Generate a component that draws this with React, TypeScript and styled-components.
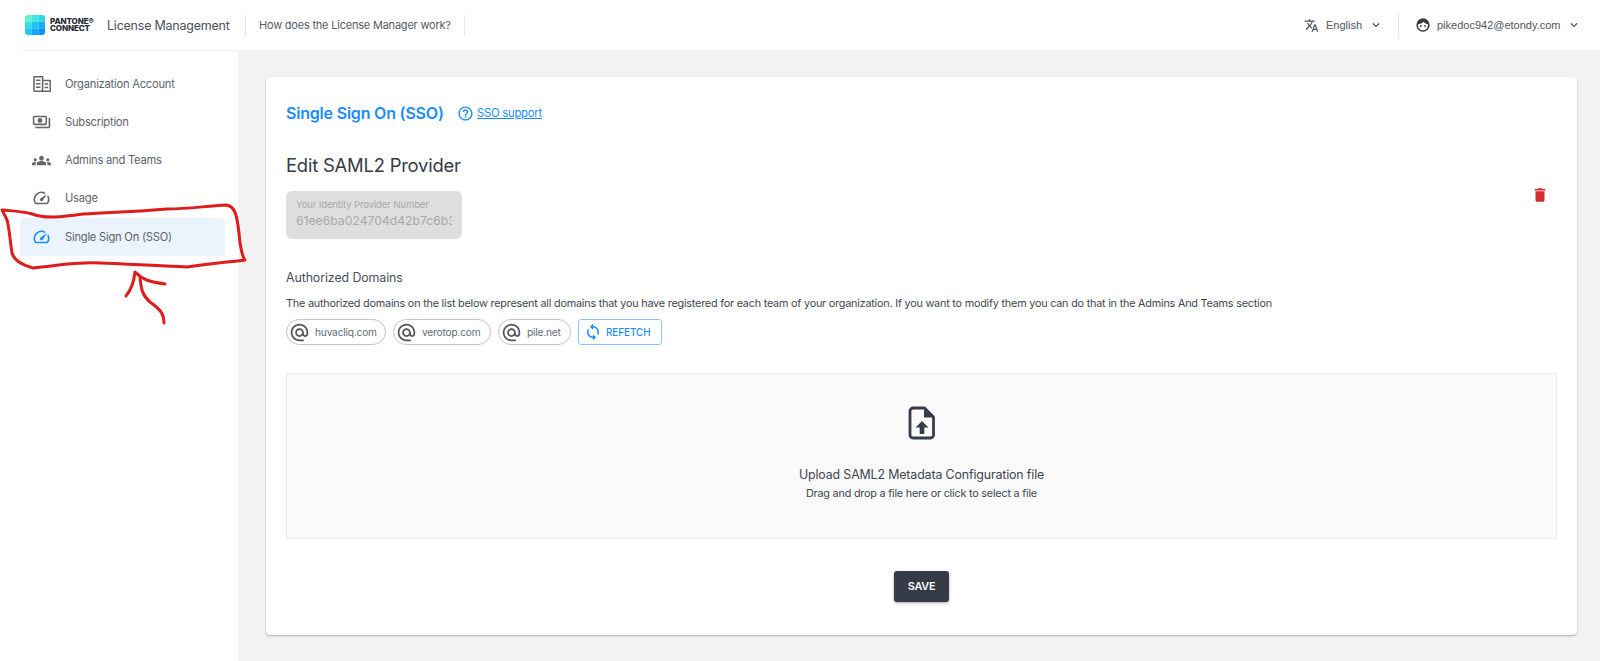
import React from "react";
import styled, { createGlobalStyle } from "styled-components";
import {
  MdOutlinePayments,
  MdGroups,
  MdSpeed,
  MdHelpOutline,
  MdDelete,
  MdSync,
  MdAlternateEmail,
  MdKeyboardArrowDown,
  MdTranslate,
} from "react-icons/md";

const Global = createGlobalStyle`
  html, body { margin: 0; padding: 0; background: #f2f2f2; }
  body { font-family: Inter, "Liberation Sans", sans-serif; color: #353b47; overflow: hidden; }
  * { box-sizing: border-box; }
`;

const Page = styled.div`
  position: relative;
  width: 1600px;
  height: 661px;
  display: flex;
  flex-direction: column;
  overflow: hidden;
`;

const Header = styled.header`
  height: 50px;
  background: #fff;
  display: flex;
  align-items: center;
  padding: 0 19px 0 25px;
  flex: none;
`;

const LogoMark = styled.svg`
  width: 20px;
  height: 20px;
  flex: none;
`;

const LogoText = styled.div`
  margin-left: 5px;
  font-size: 8px;
  line-height: 7.5px;
  font-weight: 800;
  color: #23272f;
  width: 57px;
  letter-spacing: -0.1px;
`;

const AppName = styled.div`
  font-size: 12.5px;
  color: #4a505c;
  letter-spacing: -0.23px;
  width: 138px;
  white-space: nowrap;
`;

const Divider = styled.div<{ $h?: number }>`
  width: 1px;
  height: ${(p) => p.$h ?? 21}px;
  background: #e6e6e6;
  flex: none;
`;

const HelpLink = styled.div`
  font-size: 11px;
  color: #555b66;
  width: 218px;
  padding-left: 13px;
  letter-spacing: -0.21px;
  white-space: nowrap;
`;

const Spacer = styled.div`
  flex: 1;
`;

const HeaderAction = styled.div<{ $w: number; $pad?: number }>`
  display: flex;
  align-items: center;
  width: ${(p) => p.$w}px;
  padding-left: ${(p) => p.$pad ?? 0}px;
  font-family: "Liberation Sans", sans-serif;
  font-size: 11px;
  color: #4f5561;
  gap: 7px;
  flex: none;
  white-space: nowrap;
  svg { flex: none; }
`;

const Chevron = styled(MdKeyboardArrowDown)`
  color: #3a404c;
`;

const Body = styled.div`
  flex: 1;
  display: flex;
  min-height: 0;
`;

const Sidebar = styled.nav`
  width: 238px;
  background: #fff;
  flex: none;
`;

const SidebarRule = styled.div`
  height: 1px;
  margin-left: 20px;
  background: #f2f2f2;
`;

const NavList = styled.div`
  display: flex;
  flex-direction: column;
  padding: 13.4px 13px 0 20px;
`;

const NavItem = styled.div<{ $active?: boolean }>`
  height: 38.3px;
  display: flex;
  align-items: center;
  gap: 14px;
  padding-left: 12px;
  border-radius: 4px;
  font-size: 11.2px;
  letter-spacing: -0.24px;
  color: #5d636d;
  background: ${(p) => (p.$active ? "#ebf4fd" : "transparent")};
  svg { color: ${(p) => (p.$active ? "#1a8cff" : "#666")}; }
`;

const NavIcon = styled.span`
  width: 19px;
  height: 20px;
  display: flex;
  align-items: center;
  justify-content: center;
  flex: none;
`;

const Main = styled.main`
  flex: 1;
  padding: 27px 23px 26px 28px;
  min-width: 0;
`;

const Card = styled.section`
  position: relative;
  height: 558px;
  background: #fff;
  border-radius: 4px;
  box-shadow: 0 1px 2px rgba(0, 0, 0, 0.3);
  padding: 26px 20px 0;
  display: flex;
  flex-direction: column;
`;

const TitleRow = styled.div`
  display: flex;
  align-items: center;
  height: 20px;
`;

const Title = styled.h1`
  margin: 0;
  font-size: 16px;
  font-weight: 600;
  color: #1a8cff;
  letter-spacing: -0.2px;
  width: 171px;
`;

const SupportLink = styled.a`
  display: flex;
  align-items: center;
  gap: 3px;
  font-size: 11.3px;
  letter-spacing: -0.25px;
  color: #1a8cff;
  text-decoration: underline;
`;

const SubTitle = styled.h2`
  margin: 31px 0 0;
  font-size: 18.4px;
  line-height: 22px;
  font-weight: 400;
  color: #353b47;
  letter-spacing: -0.2px;
`;

const IdRow = styled.div`
  display: flex;
  justify-content: space-between;
  margin-top: 15px;
`;

const IdField = styled.div`
  width: 176px;
  height: 48px;
  background: #dedede;
  border-radius: 6px;
  padding: 8px 10px 0;
  color: #a9a9a9;
  overflow: hidden;
`;

const IdLabel = styled.div`
  font-size: 9.6px;
  line-height: 12px;
  letter-spacing: -0.15px;
`;

const IdValue = styled.div`
  font-size: 12.2px;
  line-height: 20px;
  white-space: nowrap;
  overflow: hidden;
`;

const DeleteBtn = styled.div`
  color: #d32f2f;
  margin: -5px 8px 0 0;
  line-height: 0;
  height: 18px;
`;

const SectionLabel = styled.div`
  margin-top: 31px;
  font-size: 12.4px;
  line-height: 16px;
  color: #4a505c;
  letter-spacing: -0.1px;
`;

const Description = styled.p`
  margin: 11px 0 0;
  font-size: 10.8px;
  line-height: 14px;
  color: #3f4551;
  letter-spacing: -0.2px;
  white-space: nowrap;
`;

const ChipRow = styled.div`
  display: flex;
  gap: 7px;
  margin-top: 8px;
`;

const Chip = styled.div<{ $w: number }>`
  width: ${(p) => p.$w}px;
  height: 26px;
  border: 1px solid #c4c4c4;
  border-radius: 13px;
  display: flex;
  align-items: center;
  padding-left: 2px;
  gap: 5px;
  font-size: 10.2px;
  letter-spacing: -0.2px;
  color: #666b75;
  svg { color: #555; flex: none; }
`;

const RefetchBtn = styled.div`
  width: 84px;
  height: 26px;
  border: 1px solid #8cc5ff;
  border-radius: 3px;
  display: flex;
  align-items: center;
  padding-left: 5px;
  gap: 4px;
  font-size: 9.8px;
  font-weight: 500;
  color: #1a8cff;
  svg { flex: none; }
`;

const DropZone = styled.div`
  margin-top: 28px;
  height: 166px;
  background: #fafafa;
  border: 1px solid #ececec;
  border-radius: 2px;
  display: flex;
  flex-direction: column;
  align-items: center;
  padding-top: 32px;
`;

const UploadIcon = styled.svg`
  width: 28px;
  height: 34px;
  color: #353b47;
`;

const DropTitle = styled.div`
  margin-top: 27px;
  font-size: 12.4px;
  line-height: 16px;
  color: #3f4551;
  letter-spacing: -0.14px;
`;

const DropHint = styled.div`
  margin-top: 4px;
  font-size: 10.8px;
  line-height: 14px;
  color: #3f4551;
  letter-spacing: -0.2px;
`;

const SaveRow = styled.div`
  display: flex;
  justify-content: center;
  margin-top: 32px;
`;

const SaveBtn = styled.button`
  width: 55px;
  height: 31px;
  border: 0;
  border-radius: 3px;
  background: #353b47;
  box-shadow: 0 1px 3px rgba(0, 0, 0, 0.35);
  color: #fff;
  font-family: Inter, "Liberation Sans", sans-serif;
  font-size: 10.8px;
  font-weight: 600;
  letter-spacing: -0.2px;
  padding: 0;
`;

const Scribble = styled.svg`
  position: absolute;
  left: 0;
  top: 0;
  width: 1600px;
  height: 661px;
  pointer-events: none;
`;

const BuildingIcon = () => (
  <svg width="18" height="16" viewBox="0 0 18 16" fill="none" stroke="currentColor" strokeWidth="1.5">
    <path d="M1 15.2V.8h8.6v14.4M9.6 4.6h7.6v10.6H1" />
    <path d="M3 4.3h4.5M3 7.7h4.5M3 11.2h4.5M11.5 8h3.6M11.5 11.4h3.6" />
  </svg>
);

const FaceIcon = () => (
  <svg width="14" height="14" viewBox="0 0 14 14">
    <circle cx="7" cy="7" r="5.9" fill="#fff" stroke="#353b47" strokeWidth="1.5" />
    <path d="M1.6 6.4C2.2 2.6 4.4 1 7 1s4.8 1.6 5.4 5.4C10.5 6 8.5 5.2 7.6 3.8 6.4 5.4 3.8 6.2 1.6 6.4z" fill="#353b47" />
    <circle cx="4.9" cy="8" r=".9" fill="#353b47" />
    <circle cx="9.1" cy="8" r=".9" fill="#353b47" />
  </svg>
);

const logoCells = [
  ["#62f0d2", "#45e6dc", "#2fd6ea"],
  ["#35dcee", "#1cc4f6", "#12b0fa"],
  ["#1fc8f8", "#10a8fc", "#0a90ff"],
];

const App = () => (
  <Page>
    <Global />
    <Header>
      <LogoMark viewBox="0 0 20 20">
        <clipPath id="logoClip">
          <rect width="20" height="20" rx="3" />
        </clipPath>
        <g clipPath="url(#logoClip)">
          {logoCells.map((row, y) =>
            row.map((fill, x) => (
              <rect key={`${x}-${y}`} x={x * 6.67} y={y * 6.67} width="6.7" height="6.7" fill={fill} />
            ))
          )}
        </g>
      </LogoMark>
      <LogoText>
        PANTONE®
        <br />
        CONNECT
      </LogoText>
      <AppName>License Management</AppName>
      <Divider />
      <HelpLink>How does the License Manager work?</HelpLink>
      <Divider />
      <Spacer />
      <HeaderAction $w={94}>
        <MdTranslate size={15} />
        <span>English</span>
        <Chevron size={14} />
      </HeaderAction>
      <Divider $h={25} />
      <HeaderAction $w={182} $pad={17}>
        <FaceIcon />
        <span>pikedoc942@etondy.com</span>
        <Chevron size={14} />
      </HeaderAction>
    </Header>
    <Body>
      <Sidebar>
        <SidebarRule />
        <NavList>
          <NavItem>
            <NavIcon><BuildingIcon /></NavIcon>
            Organization Account
          </NavItem>
          <NavItem>
            <NavIcon><MdOutlinePayments size={20} /></NavIcon>
            Subscription
          </NavItem>
          <NavItem>
            <NavIcon><MdGroups size={21} /></NavIcon>
            Admins and Teams
          </NavItem>
          <NavItem>
            <NavIcon><MdSpeed size={20} /></NavIcon>
            Usage
          </NavItem>
          <NavItem $active>
            <NavIcon><MdSpeed size={20} /></NavIcon>
            Single Sign On (SSO)
          </NavItem>
        </NavList>
      </Sidebar>
      <Main>
        <Card>
          <TitleRow>
            <Title>Single Sign On (SSO)</Title>
            <SupportLink>
              <MdHelpOutline size={17} />
              SSO support
            </SupportLink>
          </TitleRow>
          <SubTitle>Edit SAML2 Provider</SubTitle>
          <IdRow>
            <IdField>
              <IdLabel>Your Identity Provider Number</IdLabel>
              <IdValue>61ee6ba024704d42b7c6b3</IdValue>
            </IdField>
            <DeleteBtn>
              <MdDelete size={18} />
            </DeleteBtn>
          </IdRow>
          <SectionLabel>Authorized Domains</SectionLabel>
          <Description>
            The authorized domains on the list below represent all domains that you have registered for each team of your organization. If you want to modify them you can do that in the Admins And Teams section
          </Description>
          <ChipRow>
            <Chip $w={100}>
              <MdAlternateEmail size={21} />
              huvacliq.com
            </Chip>
            <Chip $w={98}>
              <MdAlternateEmail size={21} />
              verotop.com
            </Chip>
            <Chip $w={73}>
              <MdAlternateEmail size={21} />
              pile.net
            </Chip>
            <RefetchBtn>
              <MdSync size={18} />
              REFETCH
            </RefetchBtn>
          </ChipRow>
          <DropZone>
            <UploadIcon viewBox="0 0 28 34">
              <path
                d="M5 2h11.5L25.5 11v18a3 3 0 0 1-3 3H5a3 3 0 0 1-3-3V5a3 3 0 0 1 3-3z"
                fill="none"
                stroke="currentColor"
                strokeWidth="2.8"
                strokeLinejoin="round"
              />
              <path d="M16 2v9.5h9.5z" fill="currentColor" />
              <path d="M14 15l-6.5 6.5h4.2V28h4.6v-6.5h4.2z" fill="currentColor" />
            </UploadIcon>
            <DropTitle>Upload SAML2 Metadata Configuration file</DropTitle>
            <DropHint>Drag and drop a file here or click to select a file</DropHint>
          </DropZone>
          <SaveRow>
            <SaveBtn>SAVE</SaveBtn>
          </SaveRow>
        </Card>
      </Main>
    </Body>
    <Scribble viewBox="0 0 1600 661" fill="none" stroke="#e01b1b" strokeWidth="3" strokeLinecap="round" strokeLinejoin="round">
      <path d="M2 210C12 211 22 211 32 214C45 219 62 217 83 214C110 212 133 212 167 209C190 209 205 206 226 205C235 206 237 215 239 233C240 248 243 258 245 260C230 262 215 263 187 267C170 266 150 265 100 263C75 262 62 265 33 268C22 265 14 260 12 253C10 240 9 226 7 220C5 215 3 212 2 210Z" />
      <path d="M135 272C134 281 131 290 126 296M135 272C143 280 150 282 165 284" />
      <path d="M140 277C141 290 143 296 150 302C158 308 164 312 164 323" />
    </Scribble>
  </Page>
);

export default App;
